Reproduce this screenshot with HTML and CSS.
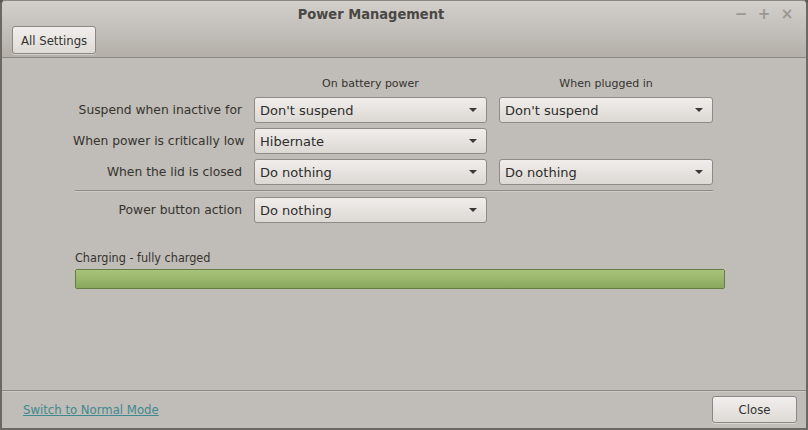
FILE: index.html
```html
<!DOCTYPE html>
<html lang="en">
<head>
  <meta charset="UTF-8">
  <meta name="viewport" content="width=device-width, initial-scale=1.0">
  <title>Power Management</title>

  <link rel="stylesheet" href="styles.css">
</head>
<body>
  <div class="window">
    <div class="header">
      <div class="titlebar">
        <span class="title">Power Management</span>
        <div class="win-buttons">
          <span class="win-btn">&minus;</span>
          <span class="win-btn">+</span>
          <span class="win-btn">&times;</span>
        </div>
      </div>
      <div class="toolbar">
        <button class="btn">All Settings</button>
      </div>
    </div>

    <div class="content">
      <div class="form">
        <div></div>
        <div class="col-head">On battery power</div>
        <div class="col-head">When plugged in</div>

        <div class="label">Suspend when inactive for</div>
        <div class="combo"><span>Don't suspend</span><span class="arrow"></span></div>
        <div class="combo"><span>Don't suspend</span><span class="arrow"></span></div>

        <div class="label">When power is critically low</div>
        <div class="combo"><span>Hibernate</span><span class="arrow"></span></div>
        <div></div>

        <div class="label">When the lid is closed</div>
        <div class="combo"><span>Do nothing</span><span class="arrow"></span></div>
        <div class="combo"><span>Do nothing</span><span class="arrow"></span></div>

        <div class="rule"></div>

        <div class="label">Power button action</div>
        <div class="combo"><span>Do nothing</span><span class="arrow"></span></div>
        <div></div>
      </div>

      <div class="battery">
        <div class="battery-label">Charging - fully charged</div>
        <div class="bar"><div class="bar-fill" style="width: 100%"></div></div>
      </div>
    </div>

    <div class="footer">
      <a class="mode-link" href="#">Switch to Normal Mode</a>
      <button class="btn close">Close</button>
    </div>
  </div>
</body>
</html>
```

FILE: styles.css
```css
body {
    margin: 0;
    height: 430px;
    overflow: hidden;
    font-family: "DejaVu Sans", sans-serif;
    font-size: 12px;
    color: #35342f;
    background-color: #5a5754;
}

.window {
    height: 430px;
    box-sizing: border-box;
    display: flex;
    flex-direction: column;
    border: 2px solid #6b6763;
    border-top: 1px solid #8a8681;
    border-radius: 5px 5px 0 0;
    background-color: #c0bcb7;
    overflow: hidden;
}

/* title bar and toolbar share one gradient */
.header {
    height: 56px;
    display: flex;
    flex-direction: column;
    background: linear-gradient(#d3cfca, #c6c2bd 40%, #b4afa9);
    border-bottom: 1px solid #8d8883;
}

.titlebar {
    height: 25px;
    display: flex;
    align-items: center;
    justify-content: center;
    position: relative;
}

.title {
    font-weight: bold;
    font-size: 14.5px;
    font-stretch: condensed;
    color: #4a4844;
    margin-right: 66px;
}

.win-buttons {
    position: absolute;
    right: 12px;
    top: 5px;
    display: flex;
    gap: 9px;
}

.win-btn {
    width: 14px;
    text-align: center;
    font-size: 15px;
    font-weight: bold;
    color: #9b9792;
    line-height: 16px;
}

.toolbar {
    padding-left: 10px;
}

.btn {
    font-family: "DejaVu Sans", sans-serif;
    font-stretch: condensed;
    font-size: 13px;
    color: #33322f;
    height: 28px;
    padding: 0 8px;
    border: 1px solid #8c8782;
    border-radius: 3px;
    background: linear-gradient(#f1efed, #dedad6);
    box-shadow: 0 1px 0 rgba(255, 255, 255, 0.4);
}

.content {
    flex: 1;
    padding: 19px 0 0 71px;
}

.form {
    display: grid;
    grid-template-columns: 169px 233px 214px;
    column-gap: 12px;
    row-gap: 5px;
    align-items: center;
    width: 652px;
}

.col-head {
    font-size: 11px;
    text-align: center;
    height: 14px;
    margin-bottom: 1px;
}

.label {
    text-align: right;
    white-space: nowrap;
    font-size: 12.3px;
}

.combo {
    height: 26px;
    box-sizing: border-box;
    display: flex;
    align-items: center;
    justify-content: space-between;
    padding: 0 9px 0 5px;
    border: 1px solid #8f8a85;
    border-radius: 3px;
    background: linear-gradient(#f0eeeb, #dcd8d4);
    font-size: 13px;
    color: #2e2d2a;
}

.arrow {
    width: 0;
    height: 0;
    border-left: 4px solid transparent;
    border-right: 4px solid transparent;
    border-top: 4px solid #3a3936;
}

.rule {
    grid-column: 1 / -1;
    height: 1px;
    background-color: #8e8a85;
    border-bottom: 1px solid #cfcbc6;
    margin: 0 0 0 2px;
}

.battery {
    margin-top: 27px;
    margin-left: 2px;
    width: 650px;
}

.battery-label {
    font-size: 12.5px;
    font-stretch: condensed;
    margin-bottom: 4px;
}

.bar {
    height: 20px;
    box-sizing: border-box;
    border: 1px solid #647d43;
    border-radius: 2px;
    background-color: #d0ccc7;
}

.bar-fill {
    height: 100%;
    background: linear-gradient(#a7c37b, #9ab86c 50%, #8aa85d);
}

.footer {
    height: 37px;
    display: flex;
    align-items: center;
    justify-content: space-between;
    padding: 0 9px 0 21px;
    border-top: 1px solid #8e8a85;
    box-shadow: inset 0 1px 0 #cdc9c4;
}

.mode-link {
    color: #3e8a90;
    font-size: 13px;
    font-stretch: condensed;
}

.close {
    width: 85px;
    height: 27px;
}
```
